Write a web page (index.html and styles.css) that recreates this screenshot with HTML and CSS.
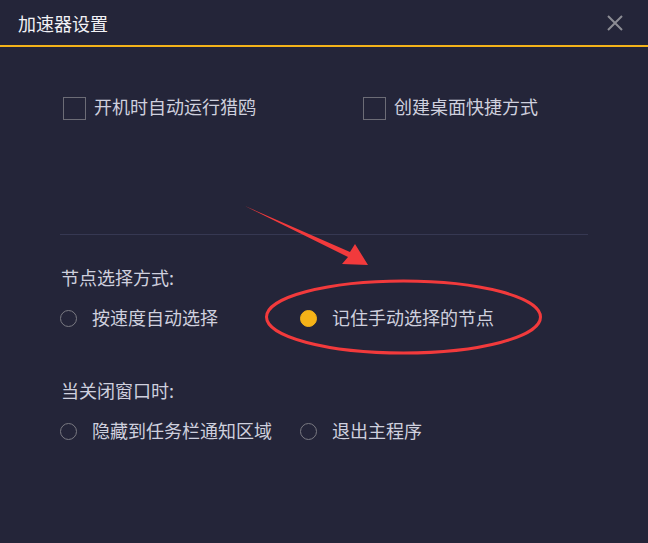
FILE: index.html
```html
<!DOCTYPE html>
<html lang="zh">
<head>
<meta charset="utf-8">
<title>加速器设置</title>
<link rel="stylesheet" href="styles.css">
</head>
<body>
<div class="window">
  <header class="titlebar">
    <span class="title">加速器设置</span>
    <svg class="close" width="16" height="16" viewBox="0 0 16 16"><path d="M1 1L15 15M15 1L1 15" stroke="#8c8c94" stroke-width="2" fill="none"/></svg>
  </header>
  <div class="accent"></div>
  <main class="content">
    <div class="check-row">
      <label class="check"><span class="box"></span><span class="txt">开机时自动运行猎鸥</span></label>
      <label class="check"><span class="box"></span><span class="txt">创建桌面快捷方式</span></label>
    </div>
    <div class="divider"></div>
    <div class="section first">
      <div class="sec-label">节点选择方式:</div>
      <div class="radio-row">
        <label class="radio"><span class="dot"></span><span class="txt">按速度自动选择</span></label>
        <label class="radio"><span class="dot on"></span><span class="txt">记住手动选择的节点</span></label>
      </div>
    </div>
    <div class="section">
      <div class="sec-label">当关闭窗口时:</div>
      <div class="radio-row">
        <label class="radio"><span class="dot"></span><span class="txt">隐藏到任务栏通知区域</span></label>
        <label class="radio"><span class="dot"></span><span class="txt">退出主程序</span></label>
      </div>
    </div>
  </main>
  <svg class="annot" width="648" height="543" viewBox="0 0 648 543">
    <polygon points="245,206 350,252 355,244 368,265 342,264 348,257" fill="#f23a3c"/>
    <ellipse cx="403.5" cy="317" rx="137" ry="36" fill="none" stroke="#f23a3c" stroke-width="3"/>
  </svg>
</div>
</body>
</html>
```
FILE: styles.css
```css
html, body {
  margin: 0;
  padding: 0;
}
body {
  background: #242539;
  font-family: "Microsoft YaHei", "Noto Sans CJK SC", "Noto Sans", sans-serif;
  color: #cfd0de;
}
.window {
  position: relative;
  width: 648px;
  height: 543px;
  background: #242539;
  overflow: hidden;
}
.titlebar {
  height: 45px;
  display: flex;
  align-items: center;
  justify-content: space-between;
  padding: 0 25px 0 18px;
}
.title {
  font-size: 18px;
  line-height: 24px;
  color: #f2f2f6;
  margin-top: 1px;
}
.close {
  display: block;
  margin-top: 1px;
}
.accent {
  height: 2px;
  background: #f4b31a;
}
.content {
  padding: 50px 60px 0 60px;
  display: flex;
  flex-direction: column;
}
.check-row {
  display: flex;
  height: 23px;
  padding-left: 3px;
}
.check {
  flex: none;
  width: 300px;
  display: flex;
  align-items: center;
  gap: 8px;
}
.check:last-child {
  width: auto;
}
.box {
  flex: none;
  width: 21px;
  height: 21px;
  border: 1px solid #6c6c76;
  box-sizing: content-box;
}
.txt {
  font-size: 18px;
  line-height: 23px;
  color: #cfd0de;
  margin-top: -4px;
  white-space: nowrap;
}
.divider {
  margin-top: 114px;
  height: 1px;
  background: #363852;
  width: 528px;
}
.section {
  display: flex;
  flex-direction: column;
  margin-top: 48px;
}
.section.first {
  margin-top: 30px;
}
.sec-label {
  font-size: 18px;
  line-height: 24px;
  color: #cfd0de;
  padding-left: 1px;
}
.radio-row {
  display: flex;
  margin-top: 17px;
  height: 24px;
}
.radio {
  flex: none;
  width: 240px;
  display: flex;
  align-items: center;
  gap: 15px;
}
.radio:last-child {
  width: auto;
}
.radio .txt {
  margin-top: -2px;
}
.dot {
  width: 15px;
  height: 15px;
  border: 1px solid #7a7a82;
  border-radius: 50%;
  box-sizing: content-box;
  flex: none;
}
.dot.on {
  border-color: #f5b318;
  background: #f5b318;
}
.annot {
  position: absolute;
  left: 0;
  top: 0;
  pointer-events: none;
}
```
